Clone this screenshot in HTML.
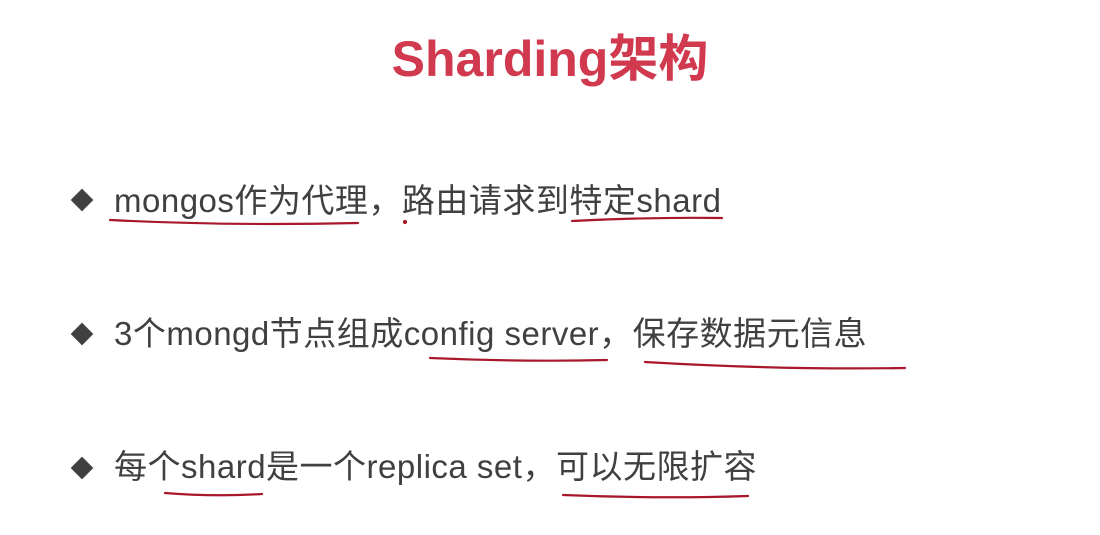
<!DOCTYPE html>
<html><head><meta charset="utf-8"><style>
body{margin:0;width:1100px;height:535px;background:#fff;overflow:hidden;position:relative;font-family:"Liberation Sans","Noto Sans CJK SC",sans-serif}
.t{position:absolute;left:0;width:1100px;top:19px;text-align:center;font-size:50px;font-weight:bold;color:#d0394e;}
.l{position:absolute;left:114px;font-size:33px;color:#404040;white-space:nowrap;letter-spacing:0.5px}
.d{position:absolute;left:74px;width:16px;height:16px;background:#404040;transform:rotate(45deg)}
svg{position:absolute;left:0;top:0}
</style></head><body>
<div class="t">Sharding架构</div>
<div class="d" style="top:192px"></div>
<div class="l" style="top:174px">mongos作为代理，路由请求到特定shard</div>
<div class="d" style="top:326px"></div>
<div class="l" style="top:307px">3个mongd节点组成config server，保存数据元信息</div>
<div class="d" style="top:460px"></div>
<div class="l" style="top:440px">每个shard是一个replica set，可以无限扩容</div>
<svg width="1100" height="535" fill="none" stroke="#a8182a" stroke-width="2.2" stroke-linecap="round">
<path d="M110 220 Q230 226 358 223"/>
<path d="M572 221 Q650 217 722 218"/>
<circle cx="405" cy="222" r="1" fill="#a8182a"/>
<path d="M430 358 Q520 362 607 360"/>
<path d="M645 362 Q780 370 905 368"/>
<path d="M165 493 Q215 497 262 494"/>
<path d="M563 495 Q660 499 748 496"/>
</svg>
</body></html>
